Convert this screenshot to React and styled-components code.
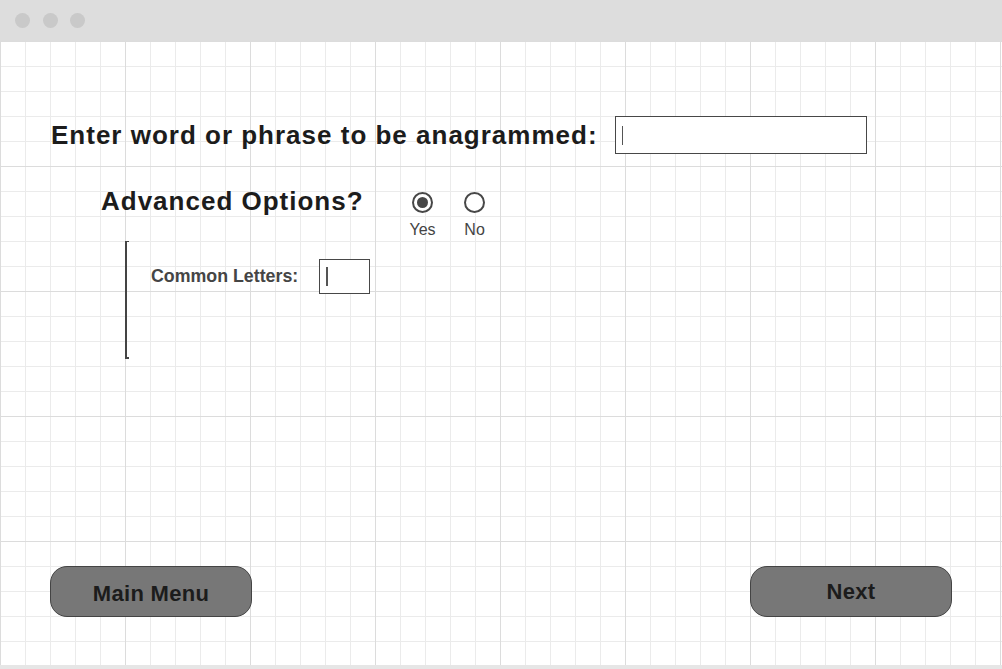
import React from "react";
import styled, { createGlobalStyle } from "styled-components";

const Global = createGlobalStyle`
  html, body { margin: 0; padding: 0; background: #fff; }
  body { font-family: "Liberation Sans", Arial, sans-serif; overflow: hidden; }
`;

const Window = styled.div`
  width: 1002px;
  height: 669px;
  display: flex;
  flex-direction: column;
  box-sizing: border-box;
`;

const TitleBar = styled.div`
  height: 41px;
  flex: 0 0 41px;
  background: #dddddd;
  display: flex;
  align-items: center;
  gap: 12.5px;
  padding-left: 15px;
  box-sizing: border-box;
`;

const Dot = styled.span`
  width: 15px;
  height: 15px;
  border-radius: 50%;
  background: #c9c9c9;
`;

const Canvas = styled.div`
  flex: 1;
  display: flex;
  flex-direction: column;
  box-sizing: border-box;
  border-bottom: 4px solid #e6e6e6;
  background-color: #fff;
  background-image:
    linear-gradient(to right, #dcdcdc 1px, transparent 1px),
    linear-gradient(to bottom, #dcdcdc 1px, transparent 1px),
    linear-gradient(to right, #ebebeb 1px, transparent 1px),
    linear-gradient(to bottom, #ebebeb 1px, transparent 1px);
  background-size: 125px 125px, 125px 125px, 25px 25px, 25px 25px;
  padding-top: 75px;
`;

const PromptRow = styled.div`
  display: flex;
  align-items: center;
  padding-left: 51px;
  gap: 17px;
`;

const Heading = styled.div`
  font-size: 26px;
  line-height: 26px;
  font-weight: 700;
  letter-spacing: 1px;
  color: #1c1c1c;
  white-space: nowrap;
`;

const TextBox = styled.div`
  width: ${(p) => p.$w}px;
  height: ${(p) => p.$h}px;
  box-sizing: border-box;
  border: 1.5px solid #474747;
  background: #fff;
  display: flex;
  align-items: center;
  padding-left: 6px;
`;

const Caret = styled.span`
  width: 1.5px;
  height: ${(p) => p.$h}px;
  background: #555;
`;

const OptionsRow = styled.div`
  display: flex;
  align-items: flex-start;
  padding-left: 101px;
  margin-top: 34px;
`;

const RadioGroup = styled.div`
  display: flex;
  gap: 16px;
  margin-left: 41px;
  padding-top: 4px;
`;

const RadioItem = styled.label`
  width: 36px;
  display: flex;
  flex-direction: column;
  align-items: center;
  gap: 9px;
`;

const RadioCircle = styled.span`
  width: 21px;
  height: 21px;
  box-sizing: border-box;
  border-radius: 50%;
  border: 2px solid #474747;
  background: #fff;
  display: flex;
  align-items: center;
  justify-content: center;
  &::after {
    content: "";
    width: 11px;
    height: 11px;
    border-radius: 50%;
    background: ${(p) => (p.$checked ? "#474747" : "transparent")};
  }
`;

const RadioLabel = styled.span`
  font-size: 16px;
  line-height: 16px;
  color: #444;
`;

const Bracket = styled.div`
  position: relative;
  margin-left: 125px;
  margin-top: 2.5px;
  height: 118px;
  width: 400px;
  border-left: 2px solid #444;
  box-sizing: border-box;
  padding: 18px 0 0 24px;
  &::before,
  &::after {
    content: "";
    position: absolute;
    left: 0;
    width: 2px;
    height: 1.5px;
    background: #444;
  }
  &::before { top: 0; }
  &::after { bottom: 0; }
`;

const FieldRow = styled.div`
  display: flex;
  align-items: center;
  gap: 21px;
`;

const FieldLabel = styled.div`
  font-size: 17.8px;
  font-weight: 700;
  color: #454545;
  white-space: nowrap;
`;

const Spacer = styled.div`
  flex: 1;
`;

const ButtonRow = styled.div`
  display: flex;
  justify-content: space-between;
  padding: 0 50px 48px 50px;
`;

const Button = styled.button`
  width: 202px;
  height: 51px;
  box-sizing: border-box;
  border: 1px solid #444;
  border-radius: 17px;
  background: #777777;
  color: #1c1c1c;
  font-family: "Liberation Sans", Arial, sans-serif;
  font-weight: 700;
  font-size: 22px;
  letter-spacing: 0.3px;
  padding: ${(p) => (p.$low ? "4px 0 0" : "0")};
  cursor: pointer;
`;

export default function App() {
  return (
    <>
      <Global />
      <Window>
        <TitleBar>
          <Dot />
          <Dot />
          <Dot />
        </TitleBar>
        <Canvas>
          <PromptRow>
            <Heading>Enter word or phrase to be anagrammed:</Heading>
            <TextBox $w={252} $h={38}>
              <Caret $h={19} />
            </TextBox>
          </PromptRow>
          <OptionsRow>
            <Heading>Advanced Options?</Heading>
            <RadioGroup>
              <RadioItem>
                <RadioCircle $checked />
                <RadioLabel>Yes</RadioLabel>
              </RadioItem>
              <RadioItem>
                <RadioCircle />
                <RadioLabel>No</RadioLabel>
              </RadioItem>
            </RadioGroup>
          </OptionsRow>
          <Bracket>
            <FieldRow>
              <FieldLabel>Common Letters:</FieldLabel>
              <TextBox $w={51} $h={35}>
                <Caret $h={19} />
              </TextBox>
            </FieldRow>
          </Bracket>
          <Spacer />
          <ButtonRow>
            <Button $low>Main Menu</Button>
            <Button>Next</Button>
          </ButtonRow>
        </Canvas>
      </Window>
    </>
  );
}
